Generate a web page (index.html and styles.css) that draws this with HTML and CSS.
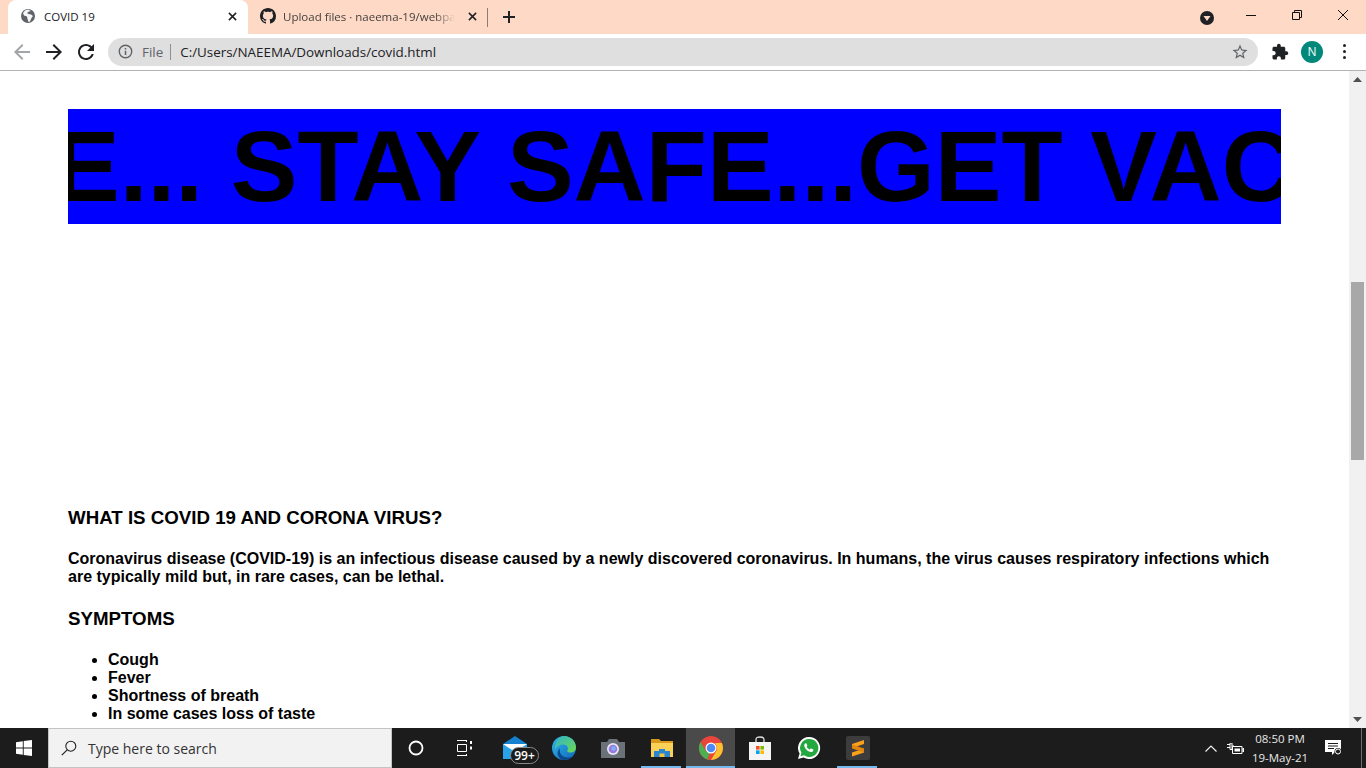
FILE: index.html
```html
<!DOCTYPE html>
<html>
<head>
  <meta charset="utf-8">
  <title>COVID 19</title>
  <link rel="stylesheet" href="styles.css">
</head>
<body>
<div class="tabbar">
  <div class="tab tab-active">
    <svg class="favicon" viewBox="0 0 16 16"><circle cx="8" cy="8" r="7" fill="#5f6368"/><path d="M8 1.500 5 2.500 3 5l1 2.500 3 1 .5 2.500 1 3 1.500-.5 1.500-3.500 1.500-2-2-1.500L8.500 6 7 5l2-1.500 2-.5z" fill="#fff" opacity=".95"/></svg>
    <span class="tab-title">COVID 19</span>
    <svg class="tab-close" viewBox="0 0 10 10"><path d="M1 1l8 8M9 1l-8 8" stroke="#202124" stroke-width="1.700" fill="none"/></svg>
  </div>
  <div class="tab tab-other">
    <svg class="favicon" viewBox="0 0 16 16"><path fill="#202124" d="M8 0C3.58 0 0 3.58 0 8c0 3.54 2.29 6.53 5.47 7.59.4.07.55-.17.55-.38 0-.19-.01-.82-.01-1.49-2.01.37-2.53-.49-2.69-.94-.09-.23-.48-.94-.82-1.13-.28-.15-.68-.52-.01-.53.63-.01 1.08.58 1.23.82.72 1.21 1.87.87 2.33.66.07-.52.28-.87.51-1.07-1.78-.2-3.64-.89-3.64-3.95 0-.87.31-1.59.82-2.15-.08-.2-.36-1.02.08-2.12 0 0 .67-.21 2.2.82.64-.18 1.32-.27 2-.27.68 0 1.36.09 2 .27 1.53-1.04 2.2-.82 2.2-.82.44 1.1.16 1.92.08 2.12.51.56.82 1.27.82 2.15 0 3.07-1.87 3.75-3.65 3.95.29.25.54.73.54 1.48 0 1.07-.01 1.93-.01 2.2 0 .21.15.46.55.38A8.013 8.013 0 0016 8c0-4.42-3.58-8-8-8z"/></svg>
    <span class="tab-title">Upload files · naeema-19/webpage</span>
    <svg class="tab-close" viewBox="0 0 10 10"><path d="M1 1l8 8M9 1l-8 8" stroke="#202124" stroke-width="1.700" fill="none"/></svg>
  </div>
  <svg class="new-tab" viewBox="0 0 12 12"><path d="M6 0v12M0 6h12" stroke="#202124" stroke-width="2" fill="none"/></svg>
  <div class="spacer"></div>
  <svg class="profile-drop" viewBox="0 0 14 14"><circle cx="7" cy="7" r="7" fill="#202124"/><path d="M3.500 5h7L7 10z" fill="#fdd9c6"/></svg>
  <div class="win-btn"><svg viewBox="0 0 12 12"><path d="M1 6.500h10" stroke="#111" fill="none"/></svg></div>
  <div class="win-btn"><svg viewBox="0 0 12 12"><path d="M1.500 3.500h7v7h-7zM3.500 3.500v-2h7v7h-2" stroke="#111" fill="none"/></svg></div>
  <div class="win-btn"><svg viewBox="0 0 12 12"><path d="M1 1l10 10M11 1L1 11" stroke="#111" fill="none"/></svg></div>
</div>

<div class="toolbar">
  <div class="nav-btn"><svg viewBox="0 0 24 24"><path fill="#a3a5a8" d="M20 11H7.830l5.590-5.590L12 4l-8 8 8 8 1.410-1.410L7.830 13H20z"/></svg></div>
  <div class="nav-btn"><svg viewBox="0 0 24 24"><path fill="#202124" d="M4 11h12.170l-5.590-5.590L12 4l8 8-8 8-1.410-1.410L16.170 13H4z"/></svg></div>
  <div class="nav-btn"><svg viewBox="0 0 24 24"><path fill="#202124" d="M17.650 6.350C16.200 4.900 14.210 4 12 4c-4.420 0-7.990 3.580-7.990 8s3.570 8 7.990 8c3.730 0 6.840-2.550 7.730-6h-2.080c-.82 2.330-3.040 4-5.650 4-3.310 0-6-2.690-6-6s2.690-6 6-6c1.660 0 3.140.69 4.220 1.780L13 11h7V4l-2.350 2.350z"/></svg></div>
  <div class="omnibox">
    <svg class="info-icon" viewBox="0 0 14 14"><circle cx="7" cy="7" r="5.800" stroke="#5f6368" stroke-width="1.300" fill="none"/><path d="M6.300 6.200h1.400v4H6.300zM6.300 3.700h1.400v1.400H6.300z" fill="#5f6368"/></svg>
    <span class="scheme">File</span>
    <span class="omni-sep"></span>
    <span class="url">C:/Users/NAEEMA/Downloads/covid.html</span>
    <div class="spacer"></div>
    <svg class="star" viewBox="0 0 24 24"><path fill="#5f6368" d="M22 9.240l-7.190-.62L12 2 9.190 8.630 2 9.240l5.460 4.730L5.820 21 12 17.270 18.180 21l-1.630-7.030L22 9.240zM12 15.400l-3.760 2.270 1-4.280-3.320-2.880 4.380-.38L12 6.100l1.710 4.040 4.380.38-3.320 2.880 1 4.280L12 15.400z"/></svg>
  </div>
  <svg class="puzzle" viewBox="0 0 24 24"><path fill="#202124" d="M20.500 11H19V7c0-1.100-.9-2-2-2h-4V3.500C13 2.120 11.880 1 10.500 1S8 2.120 8 3.500V5H4c-1.100 0-1.990.9-1.990 2v3.800H3.500c1.490 0 2.700 1.210 2.700 2.700s-1.210 2.700-2.700 2.700H2V20c0 1.100.9 2 2 2h3.800v-1.500c0-1.490 1.210-2.700 2.700-2.700 1.490 0 2.700 1.210 2.700 2.700V22H17c1.100 0 2-.9 2-2v-4h1.500c1.380 0 2.500-1.120 2.500-2.500S21.880 11 20.500 11z"/></svg>
  <div class="avatar">N</div>
  <div class="kebab"><i></i><i></i><i></i></div>
</div>

<div class="viewport">
  <div class="page">
    <div class="banner">E... STAY SAFE...GET VACCINATED</div>
    <div class="video-gap"></div>
    <h3>WHAT IS COVID 19 AND CORONA VIRUS?</h3>
    <p>Coronavirus disease (COVID-19) is an infectious disease caused by a newly discovered coronavirus. In humans, the virus causes respiratory infections which are typically mild but, in rare cases, can be lethal.</p>
    <h3>SYMPTOMS</h3>
    <ul>
      <li>Cough</li>
      <li>Fever</li>
      <li>Shortness of breath</li>
      <li>In some cases loss of taste</li>
    </ul>
  </div>
  <div class="scrollbar">
    <div class="sb-arrow"><svg viewBox="0 0 9 5"><path d="M4.500 0L9 5H0z" fill="#505050"/></svg></div>
    <div class="sb-track"><div class="sb-thumb"></div></div>
    <div class="sb-arrow"><svg viewBox="0 0 9 5"><path d="M0 0h9L4.500 5z" fill="#505050"/></svg></div>
  </div>
</div>

<div class="taskbar">
  <div class="start"><svg viewBox="0 0 16 16"><path fill="#fff" d="M0 2.200 6.800 1.200v6.400H0zM7.700 1.100 16 0v7.600H7.700zM0 8.400h6.800v6.400L0 13.800zM7.700 8.400H16V16l-8.300-1.100z"/></svg></div>
  <div class="search">
    <svg class="search-icon" viewBox="0 0 16 16"><circle cx="9.800" cy="6.200" r="5" stroke="#222" stroke-width="1.100" fill="none"/><path d="M6.200 9.800L.8 15.200" stroke="#222" stroke-width="1.200" fill="none"/></svg>
    <span>Type here to search</span>
  </div>
  <div class="task-btn"><svg class="ic-cortana" viewBox="0 0 16 16"><circle cx="8" cy="8" r="6.500" stroke="#fff" stroke-width="1.800" fill="none"/></svg></div>
  <div class="task-btn"><svg class="ic-view" viewBox="0 0 17 16"><path d="M1 .5h10M10.500 0v2M1 15.500h10M10.500 14v2M1.500 4.500h9v7h-9z" stroke="#fff" fill="none"/><path d="M14 1h2v3h-2zM14 6.500h2v3h-2z" fill="#fff"/></svg></div>
  <div class="apps">
    <div class="app">
      <svg class="ic-mail" viewBox="0 0 24 24"><path fill="#1482d0" d="M0 8 12 0l12 8v2H0z"/><path fill="#27a3ea" d="M0 8h24v15H0z"/><path fill="#fff" d="M0 8h24L12 16z"/></svg>
      <span class="mail-badge">99+</span>
    </div>
    <div class="app">
      <svg class="ic-app" viewBox="0 0 24 24"><defs><linearGradient id="edgeA" x1="0" y1="0" x2="1" y2="1"><stop offset="0" stop-color="#2fb8ee"/><stop offset="1" stop-color="#1166b8"/></linearGradient><linearGradient id="edgeB" x1="0" y1="0" x2="1" y2="1"><stop offset="0" stop-color="#2fb6c9"/><stop offset="1" stop-color="#6fd84f"/></linearGradient></defs><circle cx="12" cy="12" r="12" fill="url(#edgeA)"/><path fill="url(#edgeB)" d="M12 0c6.500 0 12 5 12 11.500 0 3-2.500 5-5.500 5-2 0-3.500-.7-3.500-1.500 2-2 1-6.500-4-6.500-3.500 0-6.500 2-8 5C3 5 7 0 12 0z"/><path fill="#0c4a8f" d="M8 12.500c-1.500 5.500 4 11.500 13 8-2.500 2.500-5.500 3.500-9 3.500-1.500 0-3-.5-3.500-1C4.500 19 5 14.500 8 12.500z"/></svg>
    </div>
    <div class="app">
      <svg class="ic-camera" viewBox="0 0 24 19"><path fill="#6b7178" d="M0 3h6l2-3h8l2 3h6v16H0z"/><circle cx="12" cy="10" r="6" fill="#e8e8f0"/><circle cx="12" cy="10" r="4.300" fill="#9a78e0"/><circle cx="12.500" cy="9.500" r="2.200" fill="#7fb0f5"/></svg>
    </div>
    <div class="app app-open">
      <svg class="ic-folder" viewBox="0 0 22 18"><path fill="#d99a1c" d="M0 0h8l2 2h12v5H0z"/><path fill="#fad057" d="M0 4h22v14H0z"/><path fill="#2a86d0" d="M3 18v-6h5v-2h6v2h5v6z"/><path fill="#f6c33a" d="M8.500 14.500h5V18h-5z"/></svg>
    </div>
    <div class="app app-active">
      <svg class="ic-app" viewBox="0 0 24 24"><circle cx="12" cy="12" r="12" fill="#e8453c"/><path fill="#4caf50" d="M12 24C5.400 24 0 18.600 0 12c0-2.200.6-4.300 1.600-6L7 15.500l4 .8L8 24z" /><path fill="#fbc02d" d="M12 7h10.900A12 12 0 0112 24l5.500-9.500c.9-2.500 0-5.500-1.500-7.500z"/><circle cx="12" cy="12" r="5.500" fill="#fff"/><circle cx="12" cy="12" r="4.300" fill="#4c8bf5"/></svg>
    </div>
    <div class="app">
      <svg class="ic-app" viewBox="0 0 24 24"><path d="M8 7V3.500C8 1.500 9.500 1 12 1s4 .5 4 2.500V7" stroke="#ddd" stroke-width="1.300" fill="none"/><path fill="#f4f4f4" d="M1 6h22v18H1z"/><path fill="#f25022" d="M8 10h3.600v3.600H8z"/><path fill="#7fba00" d="M12.400 10H16v3.600h-3.600z"/><path fill="#00a4ef" d="M8 14.400h3.600V18H8z"/><path fill="#ffb900" d="M12.400 14.400H16V18h-3.600z"/></svg>
    </div>
    <div class="app">
      <svg class="ic-app" viewBox="0 0 24 24"><path fill="#fff" d="M12 1a11 11 0 00-9.400 16.600L1 23l5.600-1.500A11 11 0 1012 1z"/><path fill="#25a83f" d="M12 3a9 9 0 00-7.600 13.700l-.9 3.500 3.600-.9A9 9 0 1012 3z"/><path fill="#fff" d="M8.800 7.200c-.3 0-.8.200-1.100.7-.5.700-.6 1.700-.2 2.800.7 1.800 2.100 3.500 4 4.600 1.400.8 2.700 1 3.600.6.800-.4 1.300-1.100 1.300-1.900l-.1-.5-2.100-1-.5.100-.8 1c-1.300-.4-2.600-1.600-3.300-2.900l.6-.8.100-.5-.9-2.100z"/></svg>
    </div>
    <div class="app app-open">
      <svg class="ic-app" viewBox="0 0 24 24"><rect width="24" height="24" rx="2" fill="#3c3c3c"/><path fill="#f9a11b" d="M18 4v4L6 12V8zM18 12.500v4l-12 4v-4z"/><path fill="#e0860e" d="M6 8.500l12 4v4l-12-4z"/></svg>
    </div>
  </div>
  <div class="spacer"></div>
  <svg class="tray-chevron" viewBox="0 0 12 7"><path d="M.5 6.500 6 1l5.500 5.500" stroke="#f0f0f0" stroke-width="1.200" fill="none"/></svg>
  <svg class="tray-power" viewBox="0 0 17 11"><path d="M0 1.500h3M0 4.500h3M3 0h2v6.500H3zM5 3h2" stroke="#fff" fill="none"/><path d="M5.500 3.500h9.500v7H5.500z" stroke="#fff" fill="#1c1c1c"/><path d="M7.500 5.500h5.500v3H7.500z" fill="#fff"/><path d="M15.500 5h1.500v4h-1.500z" fill="#fff"/></svg>
  <div class="clock"><span>08:50 PM</span><span>19-May-21</span></div>
  <svg class="tray-notif" viewBox="0 0 17 16"><path fill="#fff" d="M0 0h16v12h-6l-3 3v-3H0z"/><path d="M3 3.500h10M3 6h10M3 8.500h6" stroke="#1c1c1c" fill="none"/><circle cx="13" cy="11.500" r="3.500" fill="#1c1c1c"/><circle cx="13" cy="11.500" r="2.500" fill="none" stroke="#fff"/></svg>
  <div class="show-desktop"></div>
</div>
</body>
</html>
```

FILE: styles.css
```css
* {
  box-sizing: border-box;
}
html, body {
  margin: 0;
  height: 768px;
  overflow: hidden;
}
body {
  display: flex;
  flex-direction: column;
  font-family: "Liberation Sans", Arial, sans-serif;
  background: #fff;
}
.spacer {
  flex: 1;
}

/* tabs */
.tabbar {
  height: 34px;
  flex: none;
  display: flex;
  align-items: center;
  padding-left: 8px;
  background: #fdd9c6;
}
.tab {
  width: 240px;
  height: 34px;
  display: flex;
  align-items: center;
  gap: 8px;
  padding: 0 9px 2px 12px;
  font-family: "Open Sans", sans-serif;
  font-size: 11.500px;
}
.tab-active {
  background: #fff;
  border-radius: 8px 8px 0 0;
  color: #202124;
}
.tab-other {
  color: #45413f;
  position: relative;
  gap: 7px;
}
.tab-other::after {
  content: "";
  position: absolute;
  right: 0;
  top: 8px;
  width: 1px;
  height: 19px;
  background: #8a7d76;
}
.favicon {
  width: 16px;
  height: 16px;
  flex: none;
}
.tab-title {
  flex: 1;
  white-space: nowrap;
  overflow: hidden;
}
.tab-other .tab-title {
  -webkit-mask-image: linear-gradient(to right, #000 88%, transparent 100%);
  mask-image: linear-gradient(to right, #000 88%, transparent 100%);
}
.tab-close {
  width: 9px;
  height: 9px;
  flex: none;
  margin-right: 2px;
  margin-left: 6px;
}
.new-tab {
  width: 12px;
  height: 12px;
  margin-left: 15px;
}
.profile-drop {
  width: 14px;
  height: 14px;
  margin-right: 14px;
  margin-top: 1px;
}
.win-btn {
  width: 46px;
  height: 30px;
  align-self: flex-start;
  display: flex;
  align-items: center;
  justify-content: center;
}
.win-btn svg {
  width: 12px;
  height: 12px;
}

/* toolbar */
.toolbar {
  height: 37px;
  flex: none;
  display: flex;
  align-items: center;
  padding: 4px 0 5px 6px;
  border-bottom: 1px solid #b3b3b3;
  background: #fff;
}
.nav-btn {
  width: 32px;
  height: 28px;
  display: flex;
  align-items: center;
  justify-content: center;
}
.nav-btn svg {
  width: 24px;
  height: 24px;
}
.omnibox {
  width: 1150px;
  height: 28px;
  margin-left: 6px;
  padding: 0 9px 0 10px;
  display: flex;
  align-items: center;
  border-radius: 14px;
  background: #dfdfdf;
  font-family: "Open Sans", sans-serif;
  font-size: 13.400px;
}
.info-icon {
  width: 15px;
  height: 15px;
}
.scheme {
  margin-left: 9px;
  color: #5f6368;
  padding-top: 1px;
}
.omni-sep {
  width: 1px;
  height: 16px;
  margin: 0 9px 0 7px;
  background: #8f8f8f;
}
.url {
  color: #202124;
  padding-top: 1px;
}
.star {
  width: 18px;
  height: 18px;
}
.puzzle {
  width: 18px;
  height: 18px;
  margin-left: 13px;
}
.avatar {
  width: 22px;
  height: 22px;
  margin-left: 12px;
  border-radius: 50%;
  background: #00897b;
  color: #fff;
  font-family: "Open Sans", sans-serif;
  font-size: 12px;
  line-height: 22px;
  text-align: center;
}
.kebab {
  margin-left: 20px;
  display: flex;
  flex-direction: column;
  gap: 3px;
}
.kebab i {
  width: 3px;
  height: 3px;
  border-radius: 50%;
  background: #202124;
}

/* page */
.viewport {
  flex: 1;
  min-height: 0;
  display: flex;
}
.page {
  flex: 1;
  min-width: 0;
  padding: 38px 68px 0;
  overflow: hidden;
}
.banner {
  height: 115px;
  background: #00f;
  overflow: hidden;
  white-space: nowrap;
  font-size: 100px;
  font-weight: bold;
  line-height: 115px;
  text-indent: -15px;
  color: #000;
}
.video-gap {
  height: 283px;
}
h3 {
  margin: 0;
  font-size: 18.720px;
  line-height: 21px;
}
p {
  margin: 0;
  padding: 22px 0 22px;
  font-size: 16px;
  line-height: 18px;
  font-weight: bold;
}
ul {
  margin: 0;
  padding: 22px 0 0 40px;
  font-size: 16px;
  line-height: 18px;
  font-weight: bold;
}
.scrollbar {
  width: 17px;
  flex: none;
  display: flex;
  flex-direction: column;
  background: #f1f1f1;
}
.sb-arrow {
  height: 17px;
  flex: none;
  display: flex;
  align-items: center;
  justify-content: center;
}
.sb-arrow svg {
  width: 9px;
  height: 5px;
}
.sb-track {
  flex: 1;
  padding: 194px 2px 0 2px;
}
.sb-thumb {
  height: 178px;
  background: #a8a8a8;
}

/* taskbar */
.taskbar {
  height: 40px;
  flex: none;
  display: flex;
  align-items: center;
  background: #1c1c1c;
}
.start {
  width: 48px;
  height: 40px;
  display: flex;
  align-items: center;
  justify-content: center;
}
.start svg {
  width: 16px;
  height: 16px;
}
.search {
  width: 344px;
  height: 40px;
  padding-left: 12px;
  display: flex;
  align-items: center;
  gap: 11px;
  background: #f2f2f2;
  border: 1px solid #c4c4c4;
  font-family: "Open Sans", sans-serif;
  font-size: 14px;
  color: #333;
}
.search-icon {
  width: 16px;
  height: 16px;
}
.task-btn {
  width: 48px;
  height: 40px;
  display: flex;
  align-items: center;
  justify-content: center;
}
.ic-cortana {
  width: 16px;
  height: 16px;
}
.ic-view {
  width: 17px;
  height: 16px;
}
.apps {
  display: flex;
  margin-left: 2px;
}
.app {
  width: 49px;
  height: 40px;
  position: relative;
  display: flex;
  align-items: center;
  justify-content: center;
}
.ic-app {
  width: 24px;
  height: 24px;
}
.ic-mail {
  width: 24px;
  height: 24px;
}
.ic-camera {
  width: 24px;
  height: 19px;
}
.ic-folder {
  width: 22px;
  height: 18px;
}
.mail-badge {
  position: absolute;
  left: 20px;
  top: 19px;
  width: 29px;
  height: 17px;
  border: 1px solid #8a8a8a;
  border-radius: 9px;
  background: #1c1c1c;
  color: #fff;
  font-family: "Open Sans", sans-serif;
  font-size: 12px;
  font-weight: 600;
  line-height: 15px;
  text-align: center;
}
.app-active {
  background: #4a4a4a;
  box-shadow: inset 0 -2px #76b9ed;
}
.app-open::after {
  content: "";
  position: absolute;
  left: 4px;
  right: 5px;
  bottom: 0;
  height: 2px;
  background: #76b9ed;
}
.tray-chevron {
  width: 12px;
  height: 7px;
  margin-right: 10px;
}
.tray-power {
  width: 17px;
  height: 11px;
  margin-right: 4px;
}
.clock {
  width: 66px;
  padding-right: 2px;
  display: flex;
  flex-direction: column;
  align-items: center;
  gap: 3px;
  font-family: "Open Sans", sans-serif;
  font-size: 11.500px;
  line-height: 16px;
  color: #e8e8e8;
}
.tray-notif {
  width: 17px;
  height: 16px;
  margin-left: 11px;
  margin-right: 19px;
}
.show-desktop {
  width: 5px;
  height: 40px;
  border-left: 1px solid #6e6e6e;
}
```
